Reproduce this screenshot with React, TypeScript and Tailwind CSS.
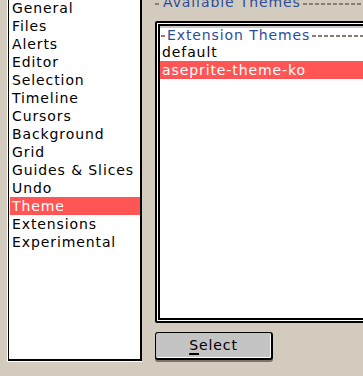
import React from "react";

const font = { fontFamily: '"DejaVu Sans", "Liberation Sans", sans-serif' };

const sections = [
  "General",
  "Files",
  "Alerts",
  "Editor",
  "Selection",
  "Timeline",
  "Cursors",
  "Background",
  "Grid",
  "Guides & Slices",
  "Undo",
  "Theme",
  "Extensions",
  "Experimental",
];

function Dash({ className }: { className: string }) {
  return (
    <div
      className={
        "h-[2px] bg-[repeating-linear-gradient(90deg,#8a7c70_0_4px,transparent_4px_6px)] " +
        className
      }
    />
  );
}

export default function App() {
  return (
    <div
      className="w-[363px] h-[376px] bg-[#d3cbbe] overflow-hidden flex items-start text-[14px] tracking-[0.9px]"
      style={font}
    >
      {/* Left list */}
      <div className="ml-[7px] mt-[-10px] h-[372px] w-[135px] shrink-0 border-l border-b border-white flex">
        <div className="flex-1 border-l border-r-2 border-b-2 border-black bg-white pt-[9px] pl-[1px]">
          {sections.map((s) => (
            <div
              key={s}
              className={
                "h-[18px] leading-[18px] pl-[2px] whitespace-nowrap " +
                (s === "Theme" ? "bg-[#ff5555] text-white" : "text-black")
              }
            >
              {s}
            </div>
          ))}
        </div>
      </div>

      {/* Right column */}
      <div className="ml-[13px] mt-[-7px] w-[230px] shrink-0 flex flex-col">
        <div className="h-[18px] flex items-start">
          <Dash className="w-[6px] mt-[10px] shrink-0" />
          <span className="ml-[2px] leading-[18px] text-[#2e4d99] whitespace-nowrap">
            Available Themes
          </span>
          <Dash className="flex-1 mt-[10px] ml-[2px]" />
        </div>

        <div className="mt-[10px] h-[302px] border-2 border-black rounded-[2px] bg-white p-[1px] flex">
          <div className="flex-1 border-2 border-black bg-white shadow-[inset_0_2px_0_#c8c8c8] flex flex-col">
            <div className="h-[17px] flex items-start">
              <Dash className="w-[4px] mt-[9px] ml-[1px] shrink-0" />
              <span className="ml-[2px] leading-[18px] text-[#2e4d99] whitespace-nowrap">
                Extension Themes
              </span>
              <Dash className="flex-1 mt-[9px] ml-[2px]" />
            </div>
            <div className="h-[18px] leading-[18px] pl-[2px] text-black whitespace-nowrap">
              default
            </div>
            <div className="h-[18px] leading-[18px] pl-[2px] bg-[#ff5555] text-white whitespace-nowrap">
              aseprite-theme-ko
            </div>
          </div>
        </div>

        <div className="mt-[9px] w-[118px] h-[28px] rounded-[3px] border-t border-l border-r-2 border-b-2 border-black bg-[#c4c4c4] shadow-[inset_-1px_-1px_0_#ffffff,0_2px_0_#7d7368] flex items-center justify-center text-black">
          <span>
            <span className="underline decoration-2 underline-offset-[3px]">S</span>elect
          </span>
        </div>
      </div>
    </div>
  );
}
